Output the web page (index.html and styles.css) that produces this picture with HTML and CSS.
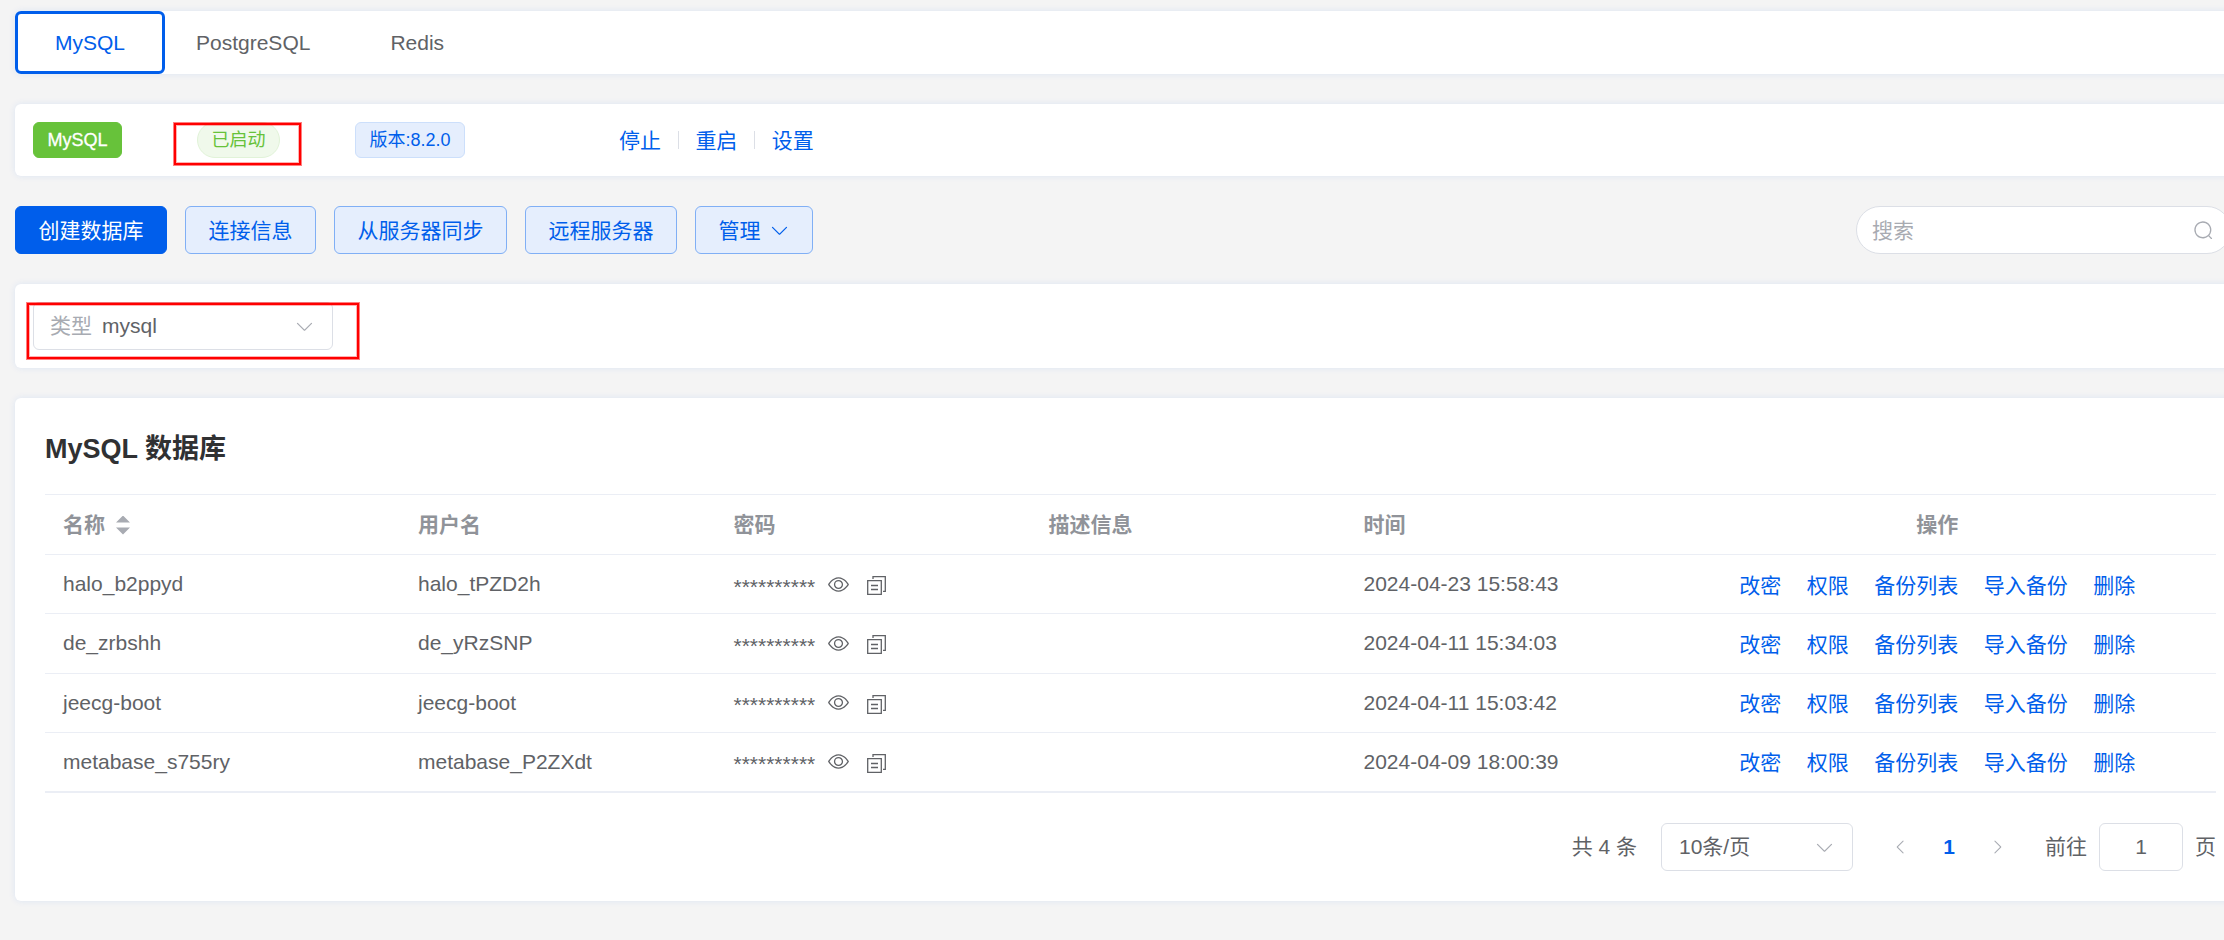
FILE: index.html
```
<!DOCTYPE html>
<html lang="zh-CN">

<head>
    <meta charset="UTF-8">
    <meta name="viewport" content="width=device-width, initial-scale=1.0">
    <title>MySQL 数据库</title>
    <link rel="stylesheet" href="styles.css">
</head>

<body>
    <svg class="sprite">
        <symbol id="arrow-down" viewBox="0 0 1024 1024"><path d="M831.872 340.864 512 652.672 192.128 340.864a30.592 30.592 0 0 0-42.752 0 29.12 29.12 0 0 0 0 41.6L489.664 714.24a32 32 0 0 0 44.672 0l340.288-331.712a29.12 29.12 0 0 0 0-41.728 30.592 30.592 0 0 0-42.752 0z"/></symbol>
        <symbol id="arrow-left" viewBox="0 0 1024 1024"><path d="M609.408 149.376 277.76 489.6a32 32 0 0 0 0 44.672l331.648 340.352a29.12 29.12 0 0 0 41.728 0 30.592 30.592 0 0 0 0-42.752L339.264 511.936l311.872-319.872a30.592 30.592 0 0 0 0-42.688 29.12 29.12 0 0 0-41.728 0z"/></symbol>
        <symbol id="search" viewBox="0 0 1024 1024"><path d="m795.904 750.72 124.992 124.928a32 32 0 0 1-45.248 45.248L750.656 795.904a416 416 0 1 1 45.248-45.248zM480 832a352 352 0 1 0 0-704 352 352 0 0 0 0 704z"/></symbol>
        <symbol id="view" viewBox="0 0 1024 1024"><path d="M512 160c320 0 512 352 512 352S832 864 512 864 0 512 0 512s192-352 512-352zm0 64c-225.28 0-384.128 208.064-436.8 288 52.608 79.872 211.456 288 436.8 288 225.28 0 384.128-208.064 436.8-288-52.608-79.872-211.456-288-436.8-288zm0 64a224 224 0 1 1 0 448 224 224 0 0 1 0-448zm0 64a160.192 160.192 0 0 0-160 160c0 88.192 71.744 160 160 160s160-71.808 160-160-71.744-160-160-160z"/></symbol>
        <symbol id="copy" viewBox="0 0 19 19"><path fill="none" stroke="currentColor" stroke-width="1.3" d="M.7 4.7h13.6v13.6H.7zM6 3V.7h12.3v14.6H16M4 9.5h7M4 13.5h7"/></symbol>
    </svg>

    <div class="page">
        <div class="card tabs">
            <div class="tab active">MySQL</div>
            <div class="tab">PostgreSQL</div>
            <div class="tab">Redis</div>
        </div>

        <div class="card status">
            <span class="tag tag-dark">MySQL</span>
            <span class="state">
                <span class="tag tag-round">已启动</span>
                <span class="mark mark-state"></span>
            </span>
            <span class="tag tag-plain">版本:8.2.0</span>
            <div class="links">
                <a>停止</a>
                <i></i>
                <a>重启</a>
                <i></i>
                <a>设置</a>
            </div>
        </div>

        <div class="toolbar">
            <div class="btn primary">创建数据库</div>
            <div class="btn">连接信息</div>
            <div class="btn">从服务器同步</div>
            <div class="btn">远程服务器</div>
            <div class="btn">管理<svg class="icon"><use href="#arrow-down"/></svg></div>
            <div class="search">
                <span>搜索</span>
                <svg class="icon"><use href="#search"/></svg>
            </div>
        </div>

        <div class="card filter">
            <div class="select">
                <span class="prefix">类型</span>
                <span>mysql</span>
                <svg class="icon"><use href="#arrow-down"/></svg>
            </div>
            <span class="mark mark-filter"></span>
        </div>

        <div class="card main">
            <h2>MySQL 数据库</h2>
            <div class="table">
                <div class="row head">
                    <div>名称<span class="sort"></span></div>
                    <div>用户名</div>
                    <div>密码</div>
                    <div>描述信息</div>
                    <div>时间</div>
                    <div class="ops">操作</div>
                </div>
                <div class="row">
                    <div>halo_b2ppyd</div>
                    <div>halo_tPZD2h</div>
                    <div class="pwd"><span>**********</span><svg class="icon"><use href="#view"/></svg><svg class="copy"><use href="#copy"/></svg></div>
                    <div></div>
                    <div>2024-04-23 15:58:43</div>
                    <div class="ops"><a>改密</a><a>权限</a><a>备份列表</a><a>导入备份</a><a>删除</a></div>
                </div>
                <div class="row">
                    <div>de_zrbshh</div>
                    <div>de_yRzSNP</div>
                    <div class="pwd"><span>**********</span><svg class="icon"><use href="#view"/></svg><svg class="copy"><use href="#copy"/></svg></div>
                    <div></div>
                    <div>2024-04-11 15:34:03</div>
                    <div class="ops"><a>改密</a><a>权限</a><a>备份列表</a><a>导入备份</a><a>删除</a></div>
                </div>
                <div class="row">
                    <div>jeecg-boot</div>
                    <div>jeecg-boot</div>
                    <div class="pwd"><span>**********</span><svg class="icon"><use href="#view"/></svg><svg class="copy"><use href="#copy"/></svg></div>
                    <div></div>
                    <div>2024-04-11 15:03:42</div>
                    <div class="ops"><a>改密</a><a>权限</a><a>备份列表</a><a>导入备份</a><a>删除</a></div>
                </div>
                <div class="row">
                    <div>metabase_s755ry</div>
                    <div>metabase_P2ZXdt</div>
                    <div class="pwd"><span>**********</span><svg class="icon"><use href="#view"/></svg><svg class="copy"><use href="#copy"/></svg></div>
                    <div></div>
                    <div>2024-04-09 18:00:39</div>
                    <div class="ops"><a>改密</a><a>权限</a><a>备份列表</a><a>导入备份</a><a>删除</a></div>
                </div>
            </div>
            <div class="pager">
                <span class="total">共 4 条</span>
                <div class="select">
                    <span>10条/页</span>
                    <svg class="icon"><use href="#arrow-down"/></svg>
                </div>
                <div class="step"><svg class="icon"><use href="#arrow-left"/></svg></div>
                <div class="step current">1</div>
                <div class="step next"><svg class="icon"><use href="#arrow-left"/></svg></div>
                <span class="goto">前往</span>
                <div class="jump">1</div>
                <span>页</span>
            </div>
        </div>
    </div>
</body>

</html>
```
FILE: styles.css
```
* {
    box-sizing: border-box;
}

body {
    margin: 0;
    height: 940px;
    overflow: hidden;
    background: #f4f4f4;
    color: #606266;
    font: 21px/30px "Liberation Sans", "Noto Sans CJK SC", sans-serif;
}

.sprite {
    display: none;
}

/* wider than the window, the right edge is cut off */
.page {
    display: flex;
    flex-direction: column;
    gap: 30px;
    width: 2246px;
    padding: 11px 0 0 15px;
}

.card {
    background: #fff;
    border-radius: 6px;
    box-shadow: 0 0 7px rgba(0, 94, 235, 0.1);
}

.icon {
    width: 21px;
    height: 21px;
    fill: currentColor;
    flex: none;
}

a {
    color: #005eeb;
}

/* tabs */
.tabs {
    display: flex;
    height: 63px;
}

.tab {
    padding: 0 33px;
    line-height: 63px;
}

.tab:nth-child(2) {
    padding-left: 31px;
}

.tab:nth-child(3) {
    padding-left: 47px;
}

.tab.active {
    width: 150px;
    padding: 0;
    text-align: center;
    line-height: 57px;
    color: #005eeb;
    border: 3px solid #005eeb;
    border-radius: 6px;
}

/* app status */
.status {
    display: flex;
    align-items: center;
    height: 72px;
    padding: 0 18px;
}

.tag {
    display: block;
    height: 36px;
    font-size: 18px;
    line-height: 34px;
    text-align: center;
    white-space: nowrap;
    border: 1px solid;
    border-radius: 6px;
}

.tag-dark {
    width: 89px;
    color: #fff;
    background: #67c23a;
    border-color: #67c23a;
    -webkit-text-stroke: 0.3px #fff;
}

.tag-round {
    width: 83px;
    color: #67c23a;
    background: #f0f9eb;
    border-color: #e1f3d8;
    border-radius: 18px;
}

.tag-plain {
    width: 110px;
    color: #005eeb;
    background: #e5eefd;
    border-color: #ccdffb;
}

.state {
    position: relative;
    margin: 0 75px;
}

.mark {
    position: absolute;
    border: 2px solid #f00;
    box-shadow: 0 0 0 1px rgba(255, 0, 0, 0.5), inset 0 0 0 1px rgba(255, 0, 0, 0.3);
}

.mark-state {
    left: -23px;
    top: 1px;
    width: 127px;
    height: 42px;
}

.links {
    display: flex;
    align-items: center;
    gap: 16.7px;
    margin-left: 154px;
}

.links a {
    padding-top: 2px;
}

.links i {
    width: 1px;
    height: 18px;
    background: #dcdfe6;
}

/* buttons and search */
.toolbar {
    display: flex;
    gap: 18px;
    height: 48px;
}

.btn {
    display: flex;
    align-items: center;
    padding: 1px 22.5px 0;
    color: #005eeb;
    background: #e5eefd;
    border: 1px solid #80aff5;
    border-radius: 6px;
}

.btn.primary {
    color: #fff;
    background: #005eeb;
    border-color: #005eeb;
}

.btn .icon {
    margin-left: 8px;
}

.search {
    display: flex;
    align-items: center;
    justify-content: space-between;
    width: 375px;
    margin: 0 15px 0 auto;
    padding: 1px 16px 0 15px;
    color: #a8abb2;
    background: #fff;
    border: 1px solid #dcdfe6;
    border-radius: 24px;
}

/* filter */
.filter {
    position: relative;
    height: 84px;
    padding: 18px;
}

.select {
    display: flex;
    align-items: center;
    height: 48px;
    padding: 0 17px;
    border: 1px solid #dcdfe6;
    border-radius: 6px;
}

.select .icon {
    margin-left: auto;
    color: #a8abb2;
}

.filter .select {
    width: 300px;
    padding-left: 16px;
}

.prefix {
    margin-right: 10px;
    color: #a8abb2;
}

.mark-filter {
    left: 12px;
    top: 19px;
    width: 332px;
    height: 56px;
}

/* table card */
.main {
    height: 503px;
    padding: 30px;
}

h2 {
    margin: 0;
    height: 66px;
    font-size: 27px;
    line-height: 42px;
    color: #303133;
}

.table {
    border: solid #ebeef5;
    border-width: 1px 0;
}

.row {
    display: grid;
    grid-template-columns: 355px 315.5px 315px 315px 315px 1fr;
    align-items: center;
    height: 59.25px;
    padding-left: 18px;
    border-bottom: 1px solid #ebeef5;
}

.row.head {
    height: 60px;
    font-weight: bold;
    color: #909399;
}

.sort {
    display: inline-block;
    width: 14px;
    height: 19px;
    margin-left: 11px;
    vertical-align: -3px;
    background: #a8abb2;
    clip-path: polygon(50% 0, 100% 7px, 0 7px, 50% 0, 50% 100%, 0 12px, 100% 12px, 50% 100%);
}

.ops {
    display: flex;
    justify-content: center;
    gap: 25.5px;
    margin-left: -20px;
}

.ops a {
    padding-top: 3px;
}

.pwd {
    display: flex;
    align-items: center;
}

.pwd span {
    width: 94px;
    padding-top: 5px;
}

.copy {
    width: 19px;
    height: 19px;
    margin: 3px 0 0 18px;
}

/* pagination */
.pager {
    display: flex;
    align-items: center;
    justify-content: flex-end;
    margin-top: 30px;
}

.total {
    margin-right: 24px;
}

.pager .select {
    width: 192px;
    margin-right: 24px;
}

.step {
    display: flex;
    align-items: center;
    justify-content: center;
    width: 48px;
    height: 48px;
    color: #a8abb2;
}

.step .icon {
    width: 18px;
    height: 18px;
}

.step.current {
    font-weight: bold;
    color: #005eeb;
}

.step.next .icon {
    transform: scaleX(-1);
}

.goto {
    margin: 0 12px 0 24px;
}

.jump {
    width: 84px;
    height: 48px;
    margin-right: 12px;
    line-height: 46px;
    text-align: center;
    border: 1px solid #dcdfe6;
    border-radius: 6px;
}
```
